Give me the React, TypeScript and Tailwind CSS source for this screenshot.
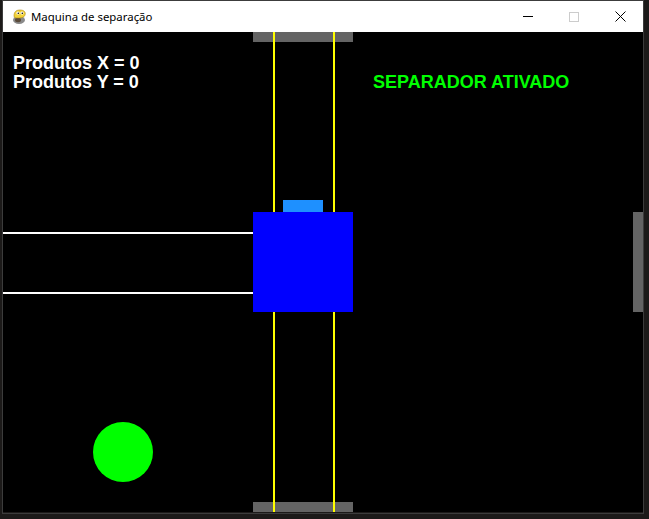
import React from "react";

function PygameIcon() {
  return (
    <svg width="16" height="16" viewBox="0 0 16 16">
      <ellipse cx="8" cy="11" rx="6" ry="4" fill="#8a8a8a" />
      <ellipse cx="7" cy="11" rx="3" ry="2.2" fill="#5a4a3a" />
      <path d="M3 7 C3 2 6 1 9 1 C13 1 15 3 14 6 C13 9 9 9 7 9 C5 9 3 9 3 7 Z" fill="#f2d23a" stroke="#b08a10" strokeWidth="0.6" />
      <circle cx="7" cy="4" r="1.6" fill="#fff" />
      <circle cx="11" cy="4" r="1.6" fill="#fff" />
      <circle cx="7.3" cy="4.2" r="0.8" fill="#000" />
      <circle cx="11.3" cy="4.2" r="0.8" fill="#000" />
    </svg>
  );
}

export default function App() {
  return (
    <div className="w-[649px] h-[519px] bg-[#1c1a19] overflow-hidden">
      <div className="ml-[2px] w-[642px] h-[514px] border border-[#3c3c3c] flex flex-col">
        <div className="h-[31px] bg-white flex items-center">
          <div className="ml-[8px] mr-[4px] flex items-center">
            <PygameIcon />
          </div>
          <span className="text-[11.4px] text-black font-['Segoe_UI','Noto_Sans',sans-serif] leading-none">
            Maquina de separação
          </span>
          <div className="ml-auto flex h-full">
            <div className="w-[46px] h-full flex items-center justify-center">
              <div className="w-[10px] h-px bg-black" />
            </div>
            <div className="w-[46px] h-full flex items-center justify-center">
              <div className="w-[10px] h-[10px] border border-[#cccccc]" />
            </div>
            <div className="w-[46px] h-full flex items-center justify-center">
              <svg width="11" height="11" viewBox="0 0 11 11">
                <path d="M0.5 0.5 L10.5 10.5 M10.5 0.5 L0.5 10.5" stroke="#000" strokeWidth="1" />
              </svg>
            </div>
          </div>
        </div>
        <div className="relative w-[640px] h-[480px] bg-black overflow-hidden font-['Liberation_Sans',Arial,sans-serif] font-bold">
          {/* top and bottom gray bars */}
          <div className="absolute left-[250px] top-0 w-[100px] h-[10px] bg-[#646464]" />
          <div className="absolute left-[250px] top-[470px] w-[100px] h-[10px] bg-[#646464]" />
          {/* yellow rails */}
          <div className="absolute left-[270px] top-0 w-[2px] h-[480px] bg-[#ffff00]" />
          <div className="absolute left-[330px] top-0 w-[2px] h-[480px] bg-[#ffff00]" />
          {/* white conveyor lines */}
          <div className="absolute left-0 top-[200px] w-[250px] h-[2px] bg-white" />
          <div className="absolute left-0 top-[260px] w-[250px] h-[2px] bg-white" />
          {/* small light blue piston */}
          <div className="absolute left-[280px] top-[168px] w-[40px] h-[12px] bg-[#1e90ff]" />
          {/* blue box */}
          <div className="absolute left-[250px] top-[180px] w-[100px] h-[100px] bg-[#0000ff]" />
          {/* right gray bar */}
          <div className="absolute left-[630px] top-[180px] w-[10px] h-[100px] bg-[#646464]" />
          {/* green circle */}
          <div className="absolute left-[90px] top-[390px] w-[60px] h-[60px] rounded-full bg-[#00ff00]" />
          {/* texts */}
          <div className="absolute left-[10px] top-[22px] text-white text-[18px] leading-[18.5px]">
            <div>Produtos X = 0</div>
            <div>Produtos Y = 0</div>
          </div>
          <div className="absolute left-[370px] top-[41px] text-[#00ff00] text-[18px] leading-[18px]">
            SEPARADOR ATIVADO
          </div>
        </div>
      </div>
    </div>
  );
}
